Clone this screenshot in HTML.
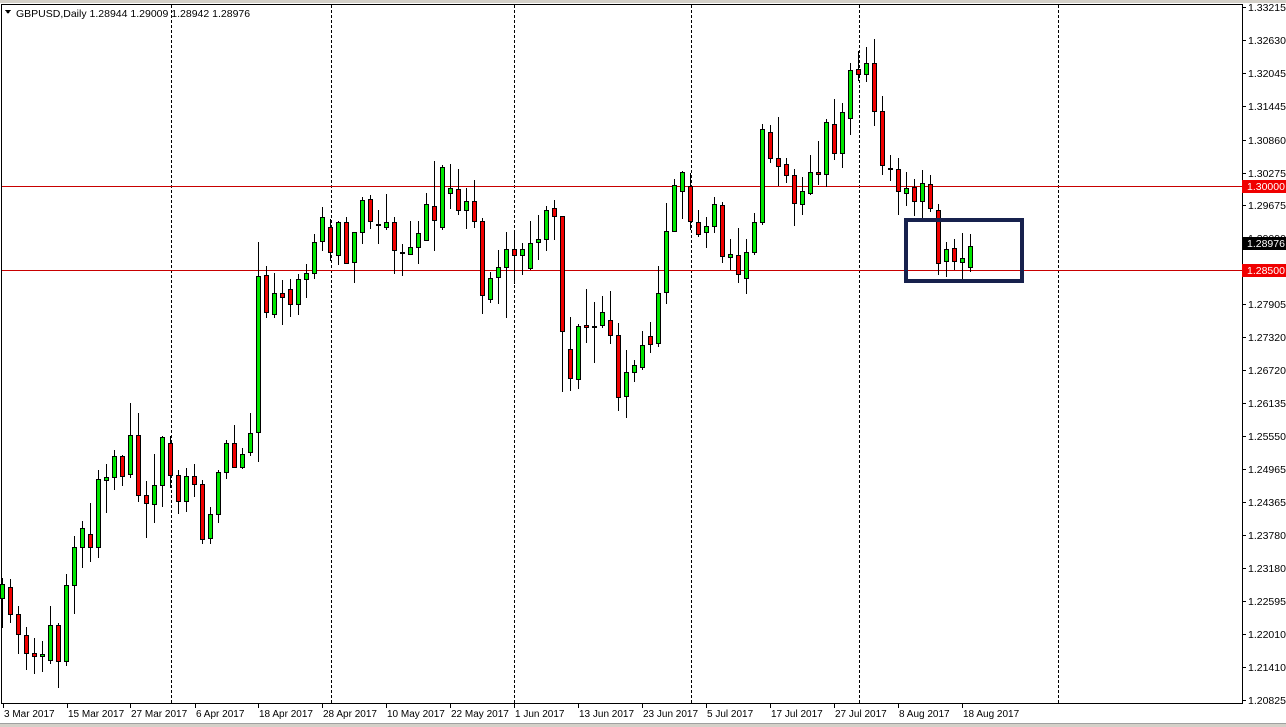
<!DOCTYPE html>
<html><head><meta charset="utf-8"><style>
body{margin:0;width:1286px;height:727px;overflow:hidden;background:#fff;font-family:"Liberation Sans",sans-serif;}
svg{display:block}
text{font-family:"Liberation Sans",sans-serif;font-size:10.5px;fill:#000}
text.t{font-size:10px}
</style></head><body>
<svg id="s" width="1286" height="727" xmlns="http://www.w3.org/2000/svg" shape-rendering="crispEdges">
<rect x="0" y="0" width="1286" height="727" fill="#fff"/>
<rect x="0" y="0" width="1286" height="3" fill="#d4d0c8"/>
<rect x="0" y="724" width="1286" height="3" fill="#d4d0c8"/>
<rect x="0" y="723" width="1286" height="1" fill="#a0a0a0"/>
<rect x="1" y="4" width="1242" height="1" fill="#000"/>
<rect x="1" y="4" width="1" height="700" fill="#000"/>
<rect x="1242" y="4" width="1" height="700" fill="#000"/>
<rect x="1" y="703" width="1242" height="1" fill="#000"/>
<g id="g"></g>
<polygon points="5,10 11,10 8,14" fill="#000"/>
<text x="16" y="17">GBPUSD,Daily  1.28944 1.29009 1.28942 1.28976</text>
</svg>
<script>
var g=document.getElementById('g'),h='';
function R(x,y,w,hh,c){h+='<rect x="'+x+'" y="'+y+'" width="'+w+'" height="'+hh+'" fill="'+c+'"/>';}
function T(x,y,t,c,cl){h+='<text x="'+x+'" y="'+y+'"'+(cl?' class="'+cl+'"':'')+(c?' style="fill:'+c+'"':'')+'>'+t+'</text>';}
[171,331,514,691,859,1058].forEach(function(x){for(var y=5;y<703;y+=5)R(x,y,1,3,'#000');});
R(2,186,1240,1,'#c80000');R(2,270,1240,1,'#c80000');
var d=[[578,584,598,627,1],[579,587,614,622,0],[606,614,634,653,0],[627,635,653,669,0],[638,653,656,673,0],[641,654,656,671,1],[606,625,660,663,1],[623,625,661,687,0],[574,585,661,665,1],[536,547,585,613,1],[521,528,547,567,1],[503,534,547,561,0],[470,479,547,557,1],[464,477,480,512,1],[450,456,477,489,1],[455,456,476,485,0],[403,435,474,477,1],[413,435,495,501,0],[481,495,503,537,0],[454,485,504,522,1],[436,437,485,506,1],[436,443,475,487,0],[470,475,501,513,0],[468,476,501,511,1],[464,476,484,496,0],[480,484,539,543,0],[507,514,538,543,1],[470,472,514,522,1],[440,443,472,478,1],[425,443,467,467,0],[448,454,467,468,1],[413,433,452,455,1],[242,276,432,461,1],[266,275,312,317,0],
[273,293,314,317,1],[280,293,297,324,0],[279,289,304,316,0],[274,279,304,314,1],[264,273,279,297,1],[234,242,273,278,1],[207,217,241,250,1],[219,227,252,260,0],[221,222,255,264,1],[217,222,263,263,0],[232,232,262,282,1],[197,200,232,243,1],[195,199,221,228,0],[210,224,225,243,0],[194,222,227,229,1],[217,222,250,273,0],[244,252,253,275,0],[221,247,254,254,1],[221,233,247,263,1],[193,204,240,240,1],[161,206,220,250,0],[165,167,227,229,1],[164,188,193,208,1],[169,189,210,214,0],[188,201,210,228,1],[180,201,221,227,0],[218,221,295,313,0],[272,278,299,302,1],[250,267,277,303,1],[232,249,267,317,1],[233,249,255,283,0],[243,249,255,274,1],
[221,243,268,269,1],[215,239,242,259,1],[206,210,239,250,1],[200,208,216,239,0],[216,216,331,391,0],[317,349,378,390,0],[324,326,379,388,1],[289,325,327,342,0],[302,326,327,362,0],[296,312,325,327,1],[291,320,335,343,0],[323,335,397,410,0],[350,372,396,417,1],[360,365,372,381,1],[331,345,367,369,1],[322,336,344,352,0],[266,293,343,346,1],[203,231,292,303,1],[179,185,231,231,1],[171,172,191,218,1],[173,186,221,229,0],[210,222,234,236,0],[217,226,232,247,1],[197,204,226,232,1],[202,205,256,262,0],[239,254,257,269,1],[228,255,274,282,0],[239,252,278,293,1],[213,222,252,254,1],
[124,129,222,224,1],[125,132,158,162,0],[117,158,166,185,0],[158,164,175,182,0],[169,175,203,225,0],[177,191,204,214,1],[155,172,193,194,1],[141,172,174,184,0],[119,122,174,186,1],[99,124,153,159,0],[103,112,153,167,1],[63,70,118,134,1],[51,69,74,80,0],[47,63,74,81,1],[39,63,111,125,0],[96,111,165,174,0],[155,168,169,180,0],[158,169,191,214,0],[172,188,193,205,1],[179,187,201,215,0],[170,183,201,218,1],[175,184,208,211,0],[204,210,263,274,0],[242,249,261,276,1],[239,248,261,269,0],[233,258,262,278,1],[234,246,267,271,1]];
d.forEach(function(c,i){var x=2+8*i;R(x,c[0],1,c[3]-c[0]+1,'#000');var bh=c[2]-c[1]+1;if(bh<2)bh=2;R(x-2,c[1],5,bh,'#000');if(bh>2)R(x-1,c[1]+1,3,bh-2,c[4]?'#00e600':'#f00000');});
R(904,218,120,4,'#17214d');R(904,279,120,4,'#17214d');R(904,218,4,65,'#17214d');R(1020,218,4,65,'#17214d');
var p=[['1.33215',7],['1.32630',40],['1.32045',73],['1.31445',106],['1.30860',140],['1.30275',173],['1.29675',205],['1.29090',238],['1.27905',304],['1.27320',337],['1.26720',370],['1.26135',403],['1.25550',436],['1.24965',469],['1.24365',502],['1.23780',535],['1.23180',568],['1.22595',601],['1.22010',634],['1.21410',667],['1.20825',700]];
p.forEach(function(a){R(1243,a[1],3,1,'#000');T(1248,a[1]+4,a[0]);});
R(1242,180,44,13,'#f00000');T(1247,190,'1.30000','#fff');
R(1242,237,44,13,'#000');T(1247,247,'1.28976','#fff');
R(1242,264,44,13,'#f00000');T(1247,274,'1.28500','#fff');
var t=[['3 Mar 2017',3],['15 Mar 2017',67],['27 Mar 2017',130],['6 Apr 2017',195],['18 Apr 2017',258],['28 Apr 2017',322],['10 May 2017',386],['22 May 2017',450],['1 Jun 2017',514],['13 Jun 2017',578],['23 Jun 2017',642],['5 Jul 2017',706],['17 Jul 2017',770],['27 Jul 2017',834],['8 Aug 2017',898],['18 Aug 2017',962]];
t.forEach(function(a){R(a[1],704,1,4,'#000');T(a[1]+1,717,a[0],null,'t');});
g.innerHTML=h;
</script>
</body></html>
